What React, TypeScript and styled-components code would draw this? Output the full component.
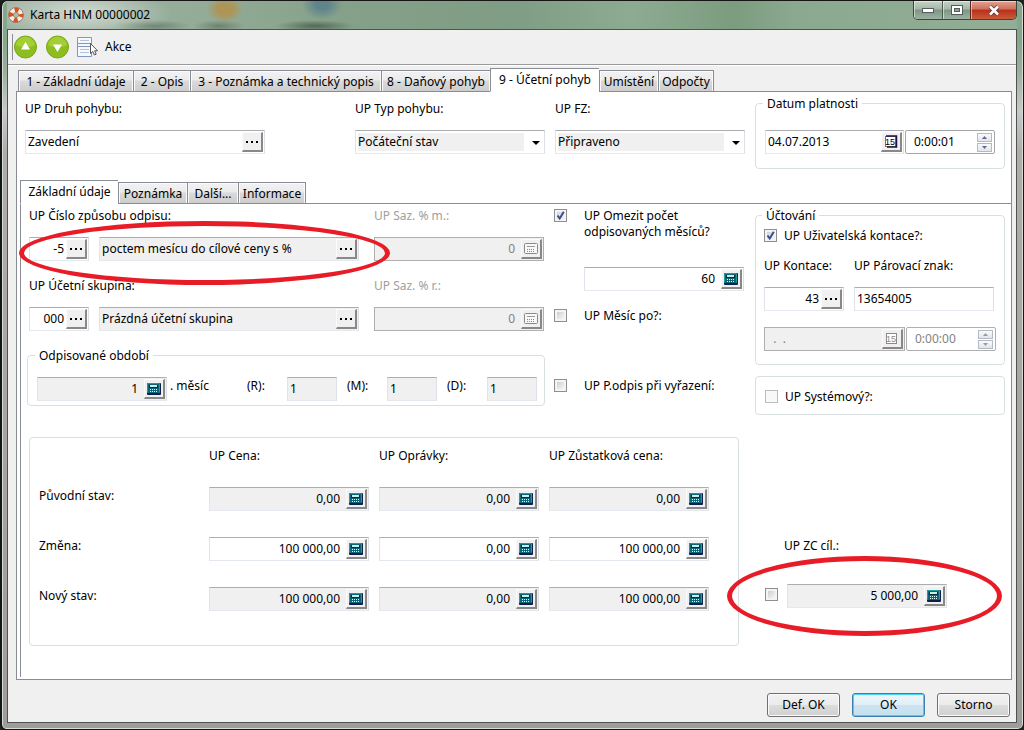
import React, { useId } from "react";
import styled, { createGlobalStyle, css } from "styled-components";

const GlobalStyle = createGlobalStyle`
  * { box-sizing: border-box; }
  html { background: #1c2420; }
  body { margin: 0; }
  body, input, select, button {
    font-family: "Noto Sans", "DejaVu Sans Condensed", sans-serif;
    font-size: 12px;
    line-height: 16px;
    color: #000;
  }
`;

/* ---------- window frame ---------- */

const Window = styled.div`
  min-height: 100vh;
  display: flex;
  flex-direction: column;
  padding: 0 6px 6px 5px;
  border: 1px solid #161616;
  border-width: 1px 1px 1px 2px;
  border-radius: 7px 7px 6px 6px;
  background: linear-gradient(#86a68b 0, #86a68b 40px, #9cae9e 70px, #c9c9c9 110px, #b0acac 150px, #a09c9c 100%);
  box-shadow: inset 0 0 0 1px #d5dcd6;
`;

const TitleBar = styled.header`
  height: 28px;
  display: flex;
  align-items: flex-start;
  background:
    radial-gradient(ellipse 90px 26px at 75px 12px, rgba(255, 255, 255, 0.55), rgba(255, 255, 255, 0) 100%),
    radial-gradient(ellipse 18px 14px at 218px 8px, rgba(176, 146, 80, 0.9) 40%, rgba(176, 146, 80, 0) 100%),
    radial-gradient(ellipse 20px 16px at 315px 3px, rgba(84, 124, 140, 0.8) 30%, rgba(84, 124, 140, 0) 100%),
    radial-gradient(ellipse 40px 6px at 145px 25px, rgba(70, 90, 74, 0.5), rgba(70, 90, 74, 0) 100%),
    radial-gradient(ellipse 26px 6px at 212px 25px, rgba(70, 90, 74, 0.5), rgba(70, 90, 74, 0) 100%),
    radial-gradient(ellipse 40px 6px at 308px 25px, rgba(60, 80, 64, 0.7), rgba(60, 80, 64, 0) 100%),
    linear-gradient(90deg, #9fb2a2 0, #93ab97 200px, #86a189 330px, #7f9d84 50%, #8cab90 62%, #7c9c80 72%, #8aa98e 78%, #93ae96 100%);
`;

const Title = styled.h1`
  flex: 1;
  display: flex;
  align-items: center;
  gap: 6px;
  margin: 0;
  padding: 6px 0 0 1px;
  font-size: 12px;
  line-height: 16px;
  font-weight: 400;
`;

const Caption = styled.div`
  display: flex;
  height: 19px;
  border: 1px solid #3b463e;
  border-top: 0;
  border-radius: 0 0 5px 5px;
  overflow: hidden;
`;

const CaptionButton = styled.button<{ $close?: boolean }>`
  width: ${(p) => (p.$close ? 46 : 28)}px;
  padding: 0;
  display: flex;
  align-items: center;
  justify-content: center;
  border: 0;
  border-left: 1px solid ${(p) => (p.$close ? "#5a2a22" : "#4e5c52")};
  box-shadow: inset 1px 1px 0 rgba(255, 255, 255, 0.5);
  background: ${(p) =>
    p.$close
      ? "linear-gradient(#e0a493, #cf6f5b 45%, #b9301a 50%, #c95a3b)"
      : "linear-gradient(#c4d2c6, #a5b7a8 45%, #7f9583 50%, #9db3a1)"};
  &:first-child { border-left: 0; }
`;

const Client = styled.main`
  flex: 1;
  display: flex;
  flex-direction: column;
  border: 1px solid #4d544f;
  background: #f0f0f0;
`;

const Toolbar = styled.div`
  display: flex;
  align-items: center;
  height: 35px;
  padding-left: 4px;
  border-bottom: 1px solid #9a9a9a;
  box-shadow: 0 1px 0 #fff;
`;

const Grip = styled.span`
  width: 1px;
  height: 26px;
  background: #8d8d8d;
`;

const ToolButton = styled.button`
  display: flex;
  align-items: center;
  gap: 6px;
  padding: 0;
  margin-right: 8px;
  border: 0;
  background: none;
`;

/* ---------- tabs ---------- */

const TabList = styled.div<{ $inner?: boolean }>`
  position: relative;
  display: flex;
  align-items: flex-end;
  margin: ${(p) => (p.$inner ? "11px 0 -1px 3px" : "3px 8px -1px 10px")};
`;

const Tab = styled.button<{ $w: number; $active?: boolean }>`
  width: ${(p) => p.$w}px;
  height: ${(p) => (p.$active ? 24 : 22)}px;
  padding: ${(p) => (p.$active ? 0 : 2)}px 0 0;
  white-space: nowrap;
  border: 1px solid #898c95;
  border-right-width: 0;
  border-bottom-color: ${(p) => (p.$active ? "#fff" : "#898c95")};
  background: ${(p) => (p.$active ? "#fff" : "linear-gradient(#f2f2f2, #ebebeb 45%, #dadada 50%, #cdcdcd)")};
  box-shadow: ${(p) => (p.$active ? "none" : "inset 1px 1px 0 #fafafa, inset -1px 0 0 #fafafa")};
  &:last-child { border-right-width: 1px; }
`;

const Panel = styled.section`
  flex: 1;
  display: flex;
  flex-direction: column;
  margin: 0 4px 0 8px;
  border: 1px solid #898c95;
  background: #fff;
`;

const InnerPanel = styled.section`
  flex: 1;
  margin: 0 0 2px 3px;
  padding: 3px 6px 30px;
  border: solid #898c95;
  border-width: 1px 0 0 1px;
`;

/* ---------- layout ---------- */

const TopRow = styled.div`
  display: grid;
  grid-template-columns: 32fr 19fr 19fr 25fr;
  gap: 10px;
  padding: 3px 6px 0 8px;
`;

const UpperGrid = styled.div`
  display: grid;
  grid-template-columns: minmax(0, 518fr) minmax(0, 192fr) minmax(0, 250fr);
  column-gap: 9px;
`;

const LowerGrid = styled.div`
  display: grid;
  grid-template-columns: minmax(0, 712fr) minmax(0, 240fr);
  column-gap: 26px;
  margin-top: 22px;
`;

const Stack = styled.div<{ $gap: number; $top?: number }>`
  display: flex;
  flex-direction: column;
  gap: ${(p) => p.$gap}px;
  padding-top: ${(p) => p.$top ?? 0}px;
  min-width: 0;
`;

const Row = styled.div<{ $gap: number }>`
  display: flex;
  gap: ${(p) => p.$gap}px;
`;

const RateRow = styled.div`
  position: relative;
  display: grid;
  grid-template-columns: 330fr 170fr;
  gap: 15px;
  padding: 0 1px 0 2px;
`;

const Label = styled.label<{ $muted?: boolean }>`
  display: block;
  padding-top: 1px;
  margin-bottom: -1px;
  white-space: nowrap;
  color: ${(p) => (p.$muted ? "#a0a0a0" : "#000")};
`;

const Group = styled.fieldset`
  min-width: 0;
  margin: 0;
  padding: 0 8px;
  border: 1px solid #d8dfe1;
  border-radius: 4px;
  > legend { padding: 1px 4px 0; margin-left: -2px; height: 16px; }
`;

const DateGroup = styled(Group)`padding: 19px 9px 14px;`;
const PostingGroup = styled(Group)`padding: 4px 8px 13px;`;
const PeriodGroup = styled(Group)`
  display: flex;
  padding: 14px 7px 4px 9px;
`;
const SystemGroup = styled(Group)`padding: 11px 9px 10px;`;
const StateGroup = styled(Group)`
  margin-left: 2px;
  padding: 9px 19px 8px 9px;
`;

const PeriodLabel = styled(Label)<{ $w: number }>`
  width: ${(p) => p.$w}px;
  padding-left: ${(p) => (p.$w > 60 ? 3 : 10)}px;
`;

/* ---------- fields ---------- */

const sunken = css<{ $ro?: boolean; $off?: boolean }>`
  border: 1px solid;
  border-color: ${(p) => (p.$off ? "#afafaf" : "#abadb3 #dbdfe6 #e3e9ef #e2e3ea")};
  background: ${(p) => (p.$ro || p.$off ? "#f0f0f0" : "#fff")};
`;

const Box = styled.div<{ $w?: number; $ro?: boolean; $off?: boolean }>`
  ${sunken}
  display: flex;
  flex: ${(p) => (p.$w ? "none" : "0 1 auto")};
  width: ${(p) => (p.$w ? p.$w + "px" : "100%")};
  height: 24px;
  min-width: 0;
  padding: 1px;
`;

const Input = styled.input<{ $right?: boolean; $pad?: number }>`
  flex: 1;
  width: 100%;
  min-width: 0;
  height: 20px;
  padding: 0 ${(p) => p.$pad ?? 2}px 2px 1px;
  border: 0;
  outline: 0;
  background: transparent;
  text-align: ${(p) => (p.$right ? "right" : "left")};
  &:disabled { color: #838383; }
`;

const FieldButton = styled.button`
  flex: none;
  display: flex;
  align-items: center;
  justify-content: center;
  width: 21px;
  height: 20px;
  padding: 0;
  border: solid;
  border-width: 1px 2px 2px 1px;
  border-color: #fbfbfb #8a8886 #8a8886 #fbfbfb;
  background: #f0f0f0;
`;

const TimeBox = styled(Box)`
  border-color: ${(p) => (p.$off ? "#afafaf" : "#a4a6aa")};
  border-radius: 2px;
  background: #fff;
  padding-left: 7px;
`;

const Spinner = styled.div`
  display: flex;
  flex-direction: column;
  gap: 1px;
  margin: 1px 1px 0 0;
`;

const SpinButton = styled.button`
  display: flex;
  align-items: center;
  justify-content: center;
  width: 15px;
  height: 9px;
  padding: 0;
  border: 1px solid #b4b9c4;
  background: linear-gradient(#fafafa, #e2e4ea);
`;

const SelectBox = styled.div`
  position: relative;
  ${sunken}
  height: 24px;
  padding: 2px 20px 2px 2px;
  > svg { position: absolute; right: 4px; top: 10px; pointer-events: none; }
`;

const Select = styled.select`
  appearance: none;
  display: block;
  width: 100%;
  height: 18px;
  padding: 0;
  border: 0;
  outline: 0;
  background: #f0f0f0;
`;

const CheckLine = styled.div<{ $gap: number }>`
  display: flex;
  align-items: flex-start;
  gap: ${(p) => p.$gap}px;
`;

const Check = styled.input`
  appearance: none;
  flex: none;
  width: 13px;
  height: 13px;
  margin: 2px 0 0;
  border: 1px solid #8e8f8f;
  background: linear-gradient(135deg, #cdcfd2, #f6f6f6) content-box, #f4f4f4;
  padding: 2px;
  &:checked {
    background:
      url("data:image/svg+xml,%3Csvg xmlns='http://www.w3.org/2000/svg' width='11' height='11'%3E%3Cpath d='M2.5 5.5l2.2 3L8.8 1.8' fill='none' stroke='%233c4f8c' stroke-width='2'/%3E%3C/svg%3E") border-box center no-repeat,
      linear-gradient(135deg, #cdd3dc, #f0f3f8) content-box, #f4f4f4;
  }
  &:disabled { border-color: #bcbcbc; background: #f8f8f8; }
`;

const Indent = styled.div`
  padding: 0 2px 0 30px;
`;

const StateTable = styled.table`
  width: 100%;
  table-layout: fixed;
  border-collapse: collapse;
  th, td { padding: 0 10px 0 0; vertical-align: top; text-align: left; font-weight: 400; }
  th { padding-top: 1px; }
  thead tr { height: 40px; }
  tbody tr { height: 50px; }
`;

const TargetPrice = styled.div`
  position: relative;
  padding-top: 100px;
  > label { margin: 0 0 30px 19px; }
`;

const TargetRow = styled(CheckLine)`
  > input { margin-top: 4px; }
`;

/* hand-drawn highlight rings lying over the form */
const Ring = styled.div`
  position: absolute;
  border: 5px solid #e81c26;
  border-radius: 50%;
  pointer-events: none;
`;
const MethodRing = styled(Ring)`left: -8px; top: 14px; width: 371px; height: 64px;`;
const PriceRing = styled(Ring)`left: -38px; top: 119px; width: 275px; height: 80px;`;

/* ---------- footer ---------- */

const Footer = styled.footer`
  display: flex;
  justify-content: flex-end;
  gap: 12px;
  padding: 13px 6px 5px;
`;

const PushButton = styled.button<{ $primary?: boolean }>`
  width: 73px;
  height: 24px;
  padding: 0;
  border: 1px solid ${(p) => (p.$primary ? "#3c7fb1" : "#707070")};
  border-radius: 3px;
  background: ${(p) =>
    p.$primary
      ? "linear-gradient(#eef6fa, #e0eff7 48%, #cde3ef 52%, #c4e2f0)"
      : "linear-gradient(#f2f2f2, #ebebeb 48%, #dddddd 52%, #cfcfcf)"};
  box-shadow: inset 0 0 0 1px ${(p) => (p.$primary ? "#46d0f3" : "#fbfbfb")};
`;

/* ---------- icons ---------- */

const LifeRing = () => (
  <svg width="16" height="16" viewBox="0 0 16 16" aria-hidden="true">
    <circle cx="8" cy="8" r="5" fill="none" stroke="#8c5a44" strokeWidth="5.4" />
    <circle cx="8" cy="8" r="5" fill="none" stroke="#f3eee8" strokeWidth="4.4" />
    <circle cx="8" cy="8" r="5" fill="none" stroke="#d9521f" strokeWidth="4.6" strokeDasharray="3.9 3.954" strokeDashoffset="1.95" />
  </svg>
);

const RoundArrow = ({ down }: { down?: boolean }) => (
  <svg width="24" height="24" viewBox="0 0 24 24" aria-hidden="true">
    <circle cx="12.500" cy="12" r="11" fill="#8dbd1e" stroke="#7aa51c" />
    <path d="M3 10a9.600 9.600 0 0 1 19 0c-5 3-14 3-19 0z" fill="#a3cf35" />
    <path d={down ? "M8 9.500h9L12.500 17z" : "M8 14.500h9L12.500 7z"} fill="#fff" />
  </svg>
);

const ActionIcon = () => (
  <svg width="22" height="22" viewBox="0 0 22 22" aria-hidden="true">
    <path d="M.5 1.500h14v19h-14z" fill="#f5f8fd" stroke="#8397bd" />
    <path d="M1 7.500h13M1 10.500h13" stroke="#8397bd" />
    <path d="M3 4.500h9M3 13.500h9M3 16.500h9" stroke="#b3c3df" />
    <path d="M13.500 7.500v10l2.300-2 1.600 3.500 1.800-.8-1.600-3.400h3z" fill="#fff" stroke="#555" />
  </svg>
);

const Dots = () => (
  <svg width="12" height="2" viewBox="0 0 12 2" aria-hidden="true">
    <path d="M0 0h2v2H0zM5 0h2v2H5zM10 0h2v2h-2z" fill="#000" />
  </svg>
);

const CalcIcon = ({ off }: { off?: boolean }) =>
  off ? (
    <svg width="14" height="13" viewBox="0 0 14 13" aria-hidden="true">
      <rect x=".5" y="1.500" width="13" height="10" rx="1" fill="#f8f8f8" stroke="#8a8a8a" />
      <path d="M3 4.500h8" stroke="#9a9a9a" />
      <path d="M3 7.500h8M3 9.500h8" stroke="#8a8a8a" strokeDasharray="1 1" />
    </svg>
  ) : (
    <svg width="14" height="12" viewBox="0 0 14 12" aria-hidden="true">
      <rect width="14" height="12" rx="1" fill="#0a1f4c" />
      <rect width="13" height="10" rx="1" fill="#1f9c9c" />
      <rect x="1" y="1" width="11" height="9" fill="#0c6474" />
      <rect x="2" y="2" width="9" height="3" fill="#04303c" />
      <rect x="3" y="2" width="7" height="2" fill="#c8ece8" />
      <path d="M3 6.500h8M3 8.500h8" stroke="#e6ffff" strokeDasharray="1 1" />
    </svg>
  );

const CalendarIcon = ({ off }: { off?: boolean }) => {
  const ink = off ? "#8a8a8a" : "#000";
  return (
    <svg width="14" height="13" viewBox="0 0 14 13" aria-hidden="true">
      <rect x="1.500" y="1.500" width="10" height="10" fill="#fff" stroke={off ? ink : "#777"} />
      {!off && <path d="M2 1h10.500v11H3" fill="none" stroke="#15154a" strokeWidth="1.500" />}
      <text x="6" y="10" textAnchor="middle" fontSize="9" fontFamily="Liberation Sans" fill={ink}>15</text>
    </svg>
  );
};

const SmallArrow = ({ down, off }: { down?: boolean; off?: boolean }) => (
  <svg width="5" height="3" viewBox="0 0 5 3" aria-hidden="true">
    <path d={down ? "M0 0h5L2.500 3z" : "M0 3h5L2.500 0z"} fill={off ? "#9a9a9a" : "#5a6a95"} />
  </svg>
);

/* ---------- composed fields ---------- */

type FieldProps = { id?: string; name: string; value: string; w?: number; ro?: boolean; off?: boolean };

const Lookup = ({ id, name, value, w, ro, right }: FieldProps & { right?: boolean }) => (
  <Box $w={w} $ro={ro}>
    <Input id={id} aria-label={name} defaultValue={value} readOnly={ro} $right={right} />
    <FieldButton type="button" aria-label={`${name} – vybrat`}><Dots /></FieldButton>
  </Box>
);

const CalcField = ({ id, name, value, w, ro, off }: FieldProps) => (
  <Box $w={w} $ro={ro} $off={off}>
    <Input id={id} aria-label={name} defaultValue={value} readOnly={ro} disabled={off} $right $pad={6} />
    <FieldButton type="button" disabled={off} aria-label={`${name} – kalkulačka`}><CalcIcon off={off} /></FieldButton>
  </Box>
);

const DateTime = ({ date, time, off }: { date: string; time: string; off?: boolean }) => (
  <Row $gap={1}>
    <Box $off={off}>
      <Input aria-label="Datum" defaultValue={date} disabled={off} />
      <FieldButton type="button" disabled={off} aria-label="Kalendář"><CalendarIcon off={off} /></FieldButton>
    </Box>
    <TimeBox $w={90} $off={off}>
      <Input aria-label="Čas" defaultValue={time} disabled={off} />
      <Spinner>
        <SpinButton type="button" disabled={off} aria-label="Více"><SmallArrow off={off} /></SpinButton>
        <SpinButton type="button" disabled={off} aria-label="Méně"><SmallArrow down off={off} /></SpinButton>
      </Spinner>
    </TimeBox>
  </Row>
);

const Dropdown = ({ label, value }: { label: string; value: string }) => {
  const id = useId();
  return (
    <Stack $gap={14} $top={5}>
      <Label htmlFor={id}>{label}</Label>
      <SelectBox>
        <Select id={id} defaultValue={value}><option>{value}</option></Select>
        <svg width="8" height="4" viewBox="0 0 8 4" aria-hidden="true"><path d="M0 0h8L4 4z" /></svg>
      </SelectBox>
    </Stack>
  );
};

const CheckField = ({ label, gap, checked, off }: { label: React.ReactNode; gap: number; checked?: boolean; off?: boolean }) => {
  const id = useId();
  return (
    <CheckLine $gap={gap}>
      <Check type="checkbox" id={id} defaultChecked={checked} disabled={off} />
      <Label htmlFor={id}>{label}</Label>
    </CheckLine>
  );
};

const Rate = ({ id, label }: { id: string; label: string }) => (
  <Stack $gap={14}>
    <Label htmlFor={id} $muted>{label}</Label>
    <CalcField id={id} name={label} value="0" off />
  </Stack>
);

const mainTabs: [string, number][] = [
  ["1 - Základní údaje", 115],
  ["2 - Opis", 57],
  ["3 - Poznámka a technický popis", 191],
  ["8 - Daňový pohyb", 109],
  ["9 - Účetní pohyb", 109],
  ["Umístění", 59],
  ["Odpočty", 56],
];

const detailTabs: [string, number][] = [
  ["Základní údaje", 98],
  ["Poznámka", 69],
  ["Další...", 51],
  ["Informace", 68],
];

const columns = ["UP Cena:", "UP Oprávky:", "UP Zůstatková cena:"];
const states = [
  { label: "Původní stav:", ro: true, values: ["0,00", "0,00", "0,00"] },
  { label: "Změna:", ro: false, values: ["100 000,00", "0,00", "100 000,00"] },
  { label: "Nový stav:", ro: true, values: ["100 000,00", "0,00", "100 000,00"] },
];

export default function App() {
  return (
    <>
      <GlobalStyle />
      <Window>
        <TitleBar>
          <Title><LifeRing />Karta HNM 00000002</Title>
          <Caption>
            <CaptionButton type="button" aria-label="Minimalizovat">
              <svg width="12" height="5" viewBox="0 0 12 5"><rect x=".5" y=".5" width="11" height="4" fill="#fff" stroke="#555c60" /></svg>
            </CaptionButton>
            <CaptionButton type="button" aria-label="Maximalizovat">
              <svg width="12" height="10" viewBox="0 0 12 10">
                <rect x=".5" y=".5" width="11" height="9" fill="#fff" stroke="#555c60" />
                <rect x="3.500" y="3.500" width="5" height="3" fill="#8fa393" stroke="#555c60" />
              </svg>
            </CaptionButton>
            <CaptionButton type="button" $close aria-label="Zavřít">
              <svg width="12" height="11" viewBox="0 0 12 11">
                <path d="M2 1.500l8 8M10 1.500l-8 8" stroke="#5a3a3a" strokeWidth="4" />
                <path d="M2 1.500l8 8M10 1.500l-8 8" stroke="#fff" strokeWidth="2.500" />
              </svg>
            </CaptionButton>
          </Caption>
        </TitleBar>

        <Client>
          <Toolbar>
            <Grip />
            <ToolButton type="button" aria-label="Předchozí"><RoundArrow /></ToolButton>
            <ToolButton type="button" aria-label="Další"><RoundArrow down /></ToolButton>
            <ToolButton type="button"><ActionIcon />Akce</ToolButton>
          </Toolbar>

          <TabList role="tablist">
            {mainTabs.map(([t, w], i) => (
              <Tab key={t} type="button" role="tab" aria-selected={i === 4} $w={w} $active={i === 4}>{t}</Tab>
            ))}
          </TabList>

          <Panel>
            <TopRow>
              <Stack $gap={14} $top={5}>
                <Label htmlFor="kind">UP Druh pohybu:</Label>
                <Lookup id="kind" name="UP Druh pohybu" value="Zavedení" w={240} />
              </Stack>
              <Dropdown label="UP Typ pohybu:" value="Počáteční stav" />
              <Dropdown label="UP FZ:" value="Připraveno" />
              <DateGroup>
                <legend>Datum platnosti</legend>
                <DateTime date="04.07.2013" time="0:00:01" />
              </DateGroup>
            </TopRow>

            <TabList role="tablist" $inner>
              {detailTabs.map(([t, w], i) => (
                <Tab key={t} type="button" role="tab" aria-selected={i === 0} $w={w} $active={i === 0}>{t}</Tab>
              ))}
            </TabList>

            <InnerPanel>
              <UpperGrid>
                <Stack $gap={16}>
                  <RateRow>
                    <Stack $gap={14}>
                      <Label htmlFor="method">UP Číslo způsobu odpisu:</Label>
                      <Row $gap={10}>
                        <Lookup id="method" name="UP Číslo způsobu odpisu" value="-5" w={60} right />
                        <Lookup name="Způsob odpisu" value="poctem mesícu do cílové ceny s %" ro />
                      </Row>
                    </Stack>
                    <Rate id="rate-m" label="UP Saz. % m.:" />
                    <MethodRing />
                  </RateRow>
                  <RateRow>
                    <Stack $gap={14}>
                      <Label htmlFor="group">UP Účetní skupina:</Label>
                      <Row $gap={10}>
                        <Lookup id="group" name="UP Účetní skupina" value="000" w={60} right />
                        <Lookup name="Název účetní skupiny" value="Prázdná účetní skupina" ro />
                      </Row>
                    </Stack>
                    <Rate id="rate-r" label="UP Saz. % r.:" />
                  </RateRow>
                  <PeriodGroup>
                    <legend>Odpisované období</legend>
                    <CalcField id="month" name="Měsíc" value="1" w={130} ro />
                    <PeriodLabel htmlFor="month" $w={70}>. měsíc</PeriodLabel>
                    {["(R):", "(M):", "(D):"].map((t) => (
                      <React.Fragment key={t}>
                        <PeriodLabel htmlFor={t} $w={50}>{t}</PeriodLabel>
                        <Box $w={50} $ro><Input id={t} defaultValue="1" readOnly /></Box>
                      </React.Fragment>
                    ))}
                  </PeriodGroup>
                </Stack>

                <div>
                  <Stack $gap={28}>
                    <CheckField gap={17} checked label={<>UP Omezit počet<br />odpisovaných měsíců?</>} />
                    <Indent><CalcField name="Počet měsíců" value="60" /></Indent>
                  </Stack>
                  <Stack $gap={54} $top={16}>
                    <CheckField gap={17} label="UP Měsíc po?:" />
                    <CheckField gap={17} label="UP P.odpis při vyřazení:" />
                  </Stack>
                </div>

                <Stack $gap={11}>
                  <PostingGroup>
                    <legend>Účtování</legend>
                    <Stack $gap={16}>
                      <Stack $gap={14}>
                        <CheckField gap={7} checked label="UP Uživatelská kontace?:" />
                        <Row $gap={10}>
                          <Stack $gap={14}>
                            <Label htmlFor="posting">UP Kontace:</Label>
                            <Lookup id="posting" name="UP Kontace" value="43" w={80} right />
                          </Stack>
                          <Stack $gap={14}>
                            <Label htmlFor="symbol">UP Párovací znak:</Label>
                            <Box $w={140}><Input id="symbol" defaultValue="13654005" /></Box>
                          </Stack>
                        </Row>
                      </Stack>
                      <DateTime date="  .  ." time="0:00:00" off />
                    </Stack>
                  </PostingGroup>
                  <SystemGroup>
                    <CheckField gap={7} off label="UP Systémový?:" />
                  </SystemGroup>
                </Stack>
              </UpperGrid>

              <LowerGrid>
                <StateGroup>
                  <StateTable>
                    <thead>
                      <tr>
                        <td />
                        {columns.map((c) => <th key={c} scope="col">{c}</th>)}
                      </tr>
                    </thead>
                    <tbody>
                      {states.map((s) => (
                        <tr key={s.label}>
                          <th scope="row">{s.label}</th>
                          {s.values.map((v, i) => (
                            <td key={columns[i]}><CalcField name={`${s.label} ${columns[i]}`} value={v} ro={s.ro} /></td>
                          ))}
                        </tr>
                      ))}
                    </tbody>
                  </StateTable>
                </StateGroup>
                <TargetPrice>
                  <Label htmlFor="target">UP ZC cíl.:</Label>
                  <TargetRow $gap={9}>
                    <Check type="checkbox" aria-label="Použít UP ZC cíl." />
                    <CalcField id="target" name="UP ZC cíl." value="5 000,00" w={160} ro />
                  </TargetRow>
                  <PriceRing />
                </TargetPrice>
              </LowerGrid>
            </InnerPanel>
          </Panel>

          <Footer>
            <PushButton type="button">Def. OK</PushButton>
            <PushButton type="button" $primary>OK</PushButton>
            <PushButton type="button">Storno</PushButton>
          </Footer>
        </Client>
      </Window>
    </>
  );
}
